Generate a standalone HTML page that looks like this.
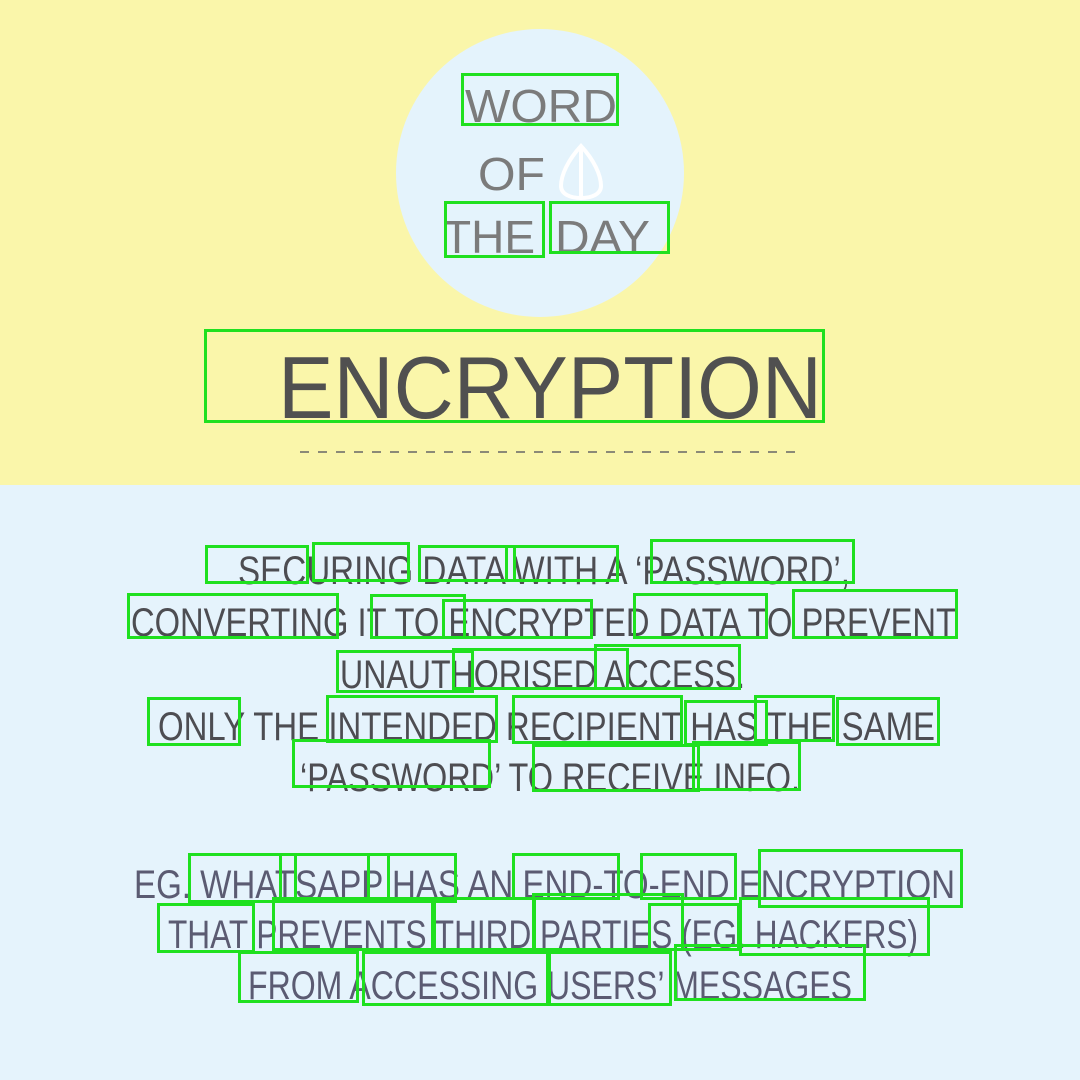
<!DOCTYPE html>
<html><head><meta charset="utf-8"><style>
html,body{margin:0;padding:0}
body{width:1080px;height:1080px;position:relative;overflow:hidden;background:#e5f3fc;font-family:"Liberation Sans",sans-serif}
.b{position:absolute;border:3px solid #1fe01f;box-sizing:border-box}
</style></head><body>
<svg width="1080" height="1080" style="position:absolute;left:0;top:0">
<rect x="0" y="0" width="1080" height="485" fill="#faf6aa"/>
<rect x="0" y="485" width="1080" height="595" fill="#e5f3fc"/>
<circle cx="540" cy="173" r="144" fill="#e4f3fc"/>
<g font-family="Liberation Sans, sans-serif" fill="#7b7b7b" font-size="46">
<text x="465" y="122" textLength="152" lengthAdjust="spacingAndGlyphs">WORD</text>
<text x="478" y="190" textLength="67" lengthAdjust="spacingAndGlyphs">OF</text>
<text x="443" y="253" textLength="92" lengthAdjust="spacingAndGlyphs">THE</text>
<text x="555" y="253" textLength="95" lengthAdjust="spacingAndGlyphs">DAY</text>
</g>
<path d="M581 146 C568 160 561 175 561 186 C561 194 570 198 581 198 C592 198 601 194 601 186 C601 175 594 160 581 146 Z M581 148 L581 197" fill="none" stroke="#fff" stroke-width="4"/>
<text x="278" y="418" font-size="88" fill="#505050" textLength="544" lengthAdjust="spacingAndGlyphs">ENCRYPTION</text>
<line x1="300" y1="452" x2="800" y2="452" stroke="#666" stroke-width="1.5" stroke-dasharray="9,9"/>
<g font-size="40" fill="#4d4d52">
<text x="238" y="584" textLength="612" lengthAdjust="spacingAndGlyphs">SECURING DATA WITH A ‘PASSWORD’,</text>
<text x="131" y="636" textLength="825" lengthAdjust="spacingAndGlyphs">CONVERTING IT TO ENCRYPTED DATA TO PREVENT</text>
<text x="340" y="688" textLength="405" lengthAdjust="spacingAndGlyphs">UNAUTHORISED ACCESS.</text>
<text x="158" y="740" textLength="777" lengthAdjust="spacingAndGlyphs">ONLY THE INTENDED RECIPIENT HAS THE SAME</text>
<text x="300" y="791" textLength="500" lengthAdjust="spacingAndGlyphs">‘PASSWORD’ TO RECEIVE INFO.</text>
</g>
<g font-size="40" fill="#5b5b72">
<text x="134" y="898" textLength="821" lengthAdjust="spacingAndGlyphs">EG. WHATSAPP HAS AN END-TO-END ENCRYPTION</text>
<text x="168" y="948" textLength="750" lengthAdjust="spacingAndGlyphs">THAT PREVENTS THIRD PARTIES (EG. HACKERS)</text>
<text x="248" y="999" textLength="604" lengthAdjust="spacingAndGlyphs">FROM ACCESSING USERS’ MESSAGES</text>
</g>
</svg>
<div class="b" style="left:461px;top:73px;width:158px;height:53px"></div>
<div class="b" style="left:444px;top:201px;width:101px;height:57px"></div>
<div class="b" style="left:549px;top:201px;width:121px;height:53px"></div>
<div class="b" style="left:204px;top:329px;width:621px;height:94px"></div>
<div class="b" style="left:205px;top:545px;width:104px;height:39px"></div>
<div class="b" style="left:312px;top:542px;width:98px;height:40px"></div>
<div class="b" style="left:418px;top:545px;width:98px;height:37px"></div>
<div class="b" style="left:505px;top:545px;width:114px;height:37px"></div>
<div class="b" style="left:650px;top:539px;width:205px;height:45px"></div>
<div class="b" style="left:127px;top:593px;width:212px;height:46px"></div>
<div class="b" style="left:370px;top:594px;width:96px;height:45px"></div>
<div class="b" style="left:442px;top:599px;width:151px;height:40px"></div>
<div class="b" style="left:633px;top:593px;width:135px;height:46px"></div>
<div class="b" style="left:792px;top:589px;width:166px;height:50px"></div>
<div class="b" style="left:336px;top:650px;width:138px;height:43px"></div>
<div class="b" style="left:452px;top:648px;width:177px;height:42px"></div>
<div class="b" style="left:594px;top:644px;width:147px;height:46px"></div>
<div class="b" style="left:147px;top:697px;width:94px;height:49px"></div>
<div class="b" style="left:326px;top:695px;width:172px;height:48px"></div>
<div class="b" style="left:512px;top:695px;width:171px;height:49px"></div>
<div class="b" style="left:684px;top:700px;width:84px;height:46px"></div>
<div class="b" style="left:754px;top:695px;width:81px;height:47px"></div>
<div class="b" style="left:836px;top:697px;width:104px;height:49px"></div>
<div class="b" style="left:292px;top:739px;width:199px;height:49px"></div>
<div class="b" style="left:532px;top:744px;width:168px;height:48px"></div>
<div class="b" style="left:692px;top:741px;width:109px;height:50px"></div>
<div class="b" style="left:188px;top:853px;width:109px;height:50px"></div>
<div class="b" style="left:279px;top:853px;width:111px;height:50px"></div>
<div class="b" style="left:367px;top:853px;width:90px;height:50px"></div>
<div class="b" style="left:512px;top:853px;width:108px;height:47px"></div>
<div class="b" style="left:640px;top:853px;width:97px;height:47px"></div>
<div class="b" style="left:758px;top:849px;width:205px;height:59px"></div>
<div class="b" style="left:157px;top:903px;width:98px;height:50px"></div>
<div class="b" style="left:272px;top:897px;width:164px;height:54px"></div>
<div class="b" style="left:431px;top:897px;width:105px;height:54px"></div>
<div class="b" style="left:532px;top:893px;width:152px;height:58px"></div>
<div class="b" style="left:648px;top:903px;width:92px;height:48px"></div>
<div class="b" style="left:739px;top:897px;width:191px;height:59px"></div>
<div class="b" style="left:238px;top:951px;width:121px;height:52px"></div>
<div class="b" style="left:362px;top:951px;width:187px;height:55px"></div>
<div class="b" style="left:548px;top:951px;width:124px;height:55px"></div>
<div class="b" style="left:674px;top:944px;width:192px;height:57px"></div>
</body></html>
